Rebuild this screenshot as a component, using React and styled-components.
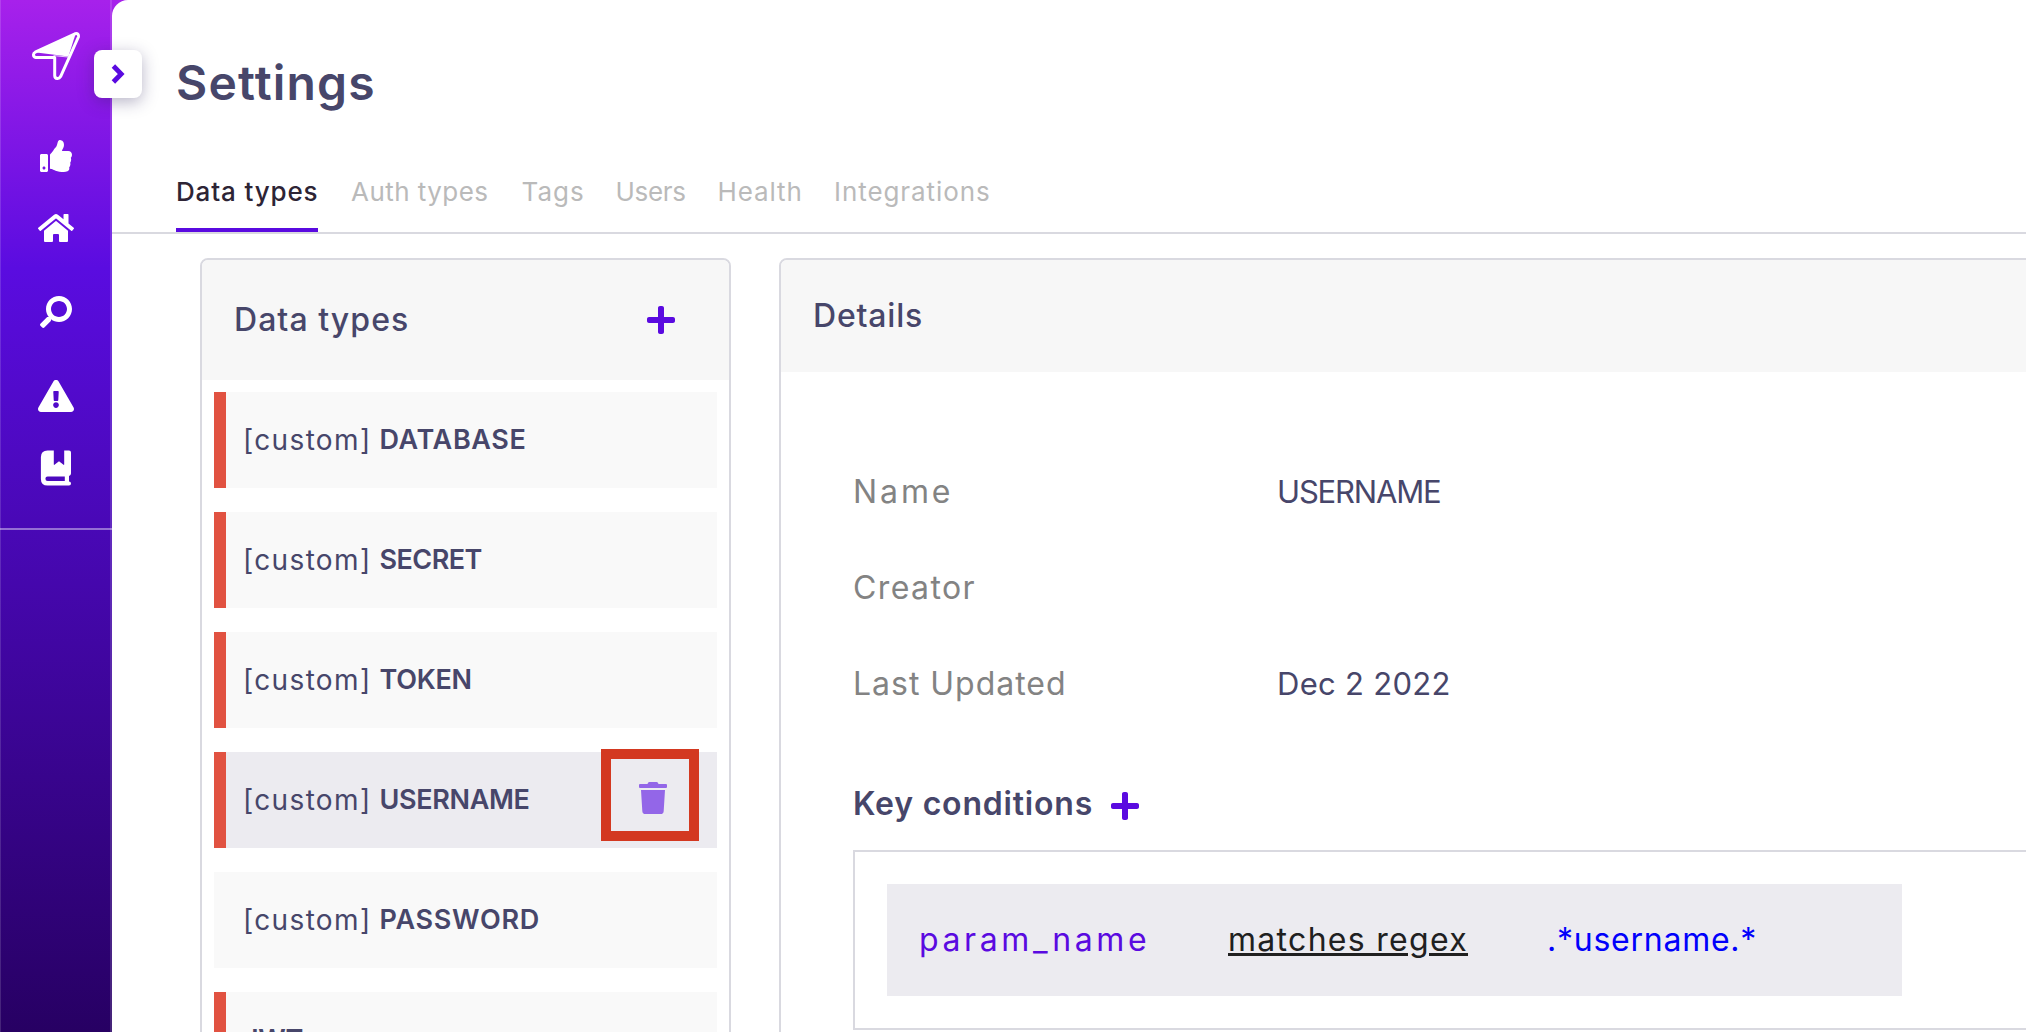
import React from "react";
import styled, { createGlobalStyle, css } from "styled-components";
import { FaThumbsUp, FaHome, FaSearch, FaExclamationTriangle, FaPlus, FaTrash } from "react-icons/fa";

const color = {
  ink: "#47466a",
  accent: "#5a0ae0",
  line: "#d9d9e0",
  panel: "#f7f7f7",
  row: "#f9f9f9",
  rowActive: "#ecebf0",
  danger: "#e15241",
};

const GlobalStyle = createGlobalStyle`
  * { box-sizing: border-box; }
  html, body { margin: 0; padding: 0; overflow: hidden; }
  body {
    font-family: Inter, "Liberation Sans", sans-serif;
    color: ${color.ink};
    -webkit-font-smoothing: antialiased;
  }
`;

const Shell = styled.div`
  display: flex;
  width: 100vw;
  height: 100vh;
  overflow: hidden;
  background: linear-gradient(180deg, #a721eb 0%, #5a0ce0 26%, #270063 100%);
`;

const Sidebar = styled.aside`
  position: relative;
  flex: 0 0 112px;
  display: flex;
  flex-direction: column;
  align-items: center;
  padding-top: 32px;
  box-shadow: inset 1px 0 0 rgba(255, 255, 255, 0.14), inset -2px 0 0 rgba(255, 255, 255, 0.14);
`;

const Logo = styled.svg`
  display: block;
  width: 48px;
  height: 48px;
  margin-bottom: 58px;
`;

const NavItem = styled.a`
  display: flex;
  align-items: center;
  justify-content: center;
  width: 112px;
  height: 36px;
  margin-bottom: ${(p) => p.$after}px;
  color: #fff;
  font-size: 32px;
  svg {
    display: block;
    ${(p) => p.$flip && css`transform: scaleX(-1);`}
  }
`;

const NavDivider = styled.div`
  width: 112px;
  height: 2px;
  background: rgba(255, 255, 255, 0.42);
`;

const ExpandButton = styled.button`
  position: absolute;
  left: 94px;
  top: 50px;
  z-index: 2;
  display: flex;
  align-items: center;
  justify-content: center;
  width: 48px;
  height: 48px;
  padding: 0;
  border: 0;
  border-radius: 8px;
  background: #fff;
  box-shadow: 0 4px 16px rgba(45, 35, 90, 0.34);
`;

const Page = styled.main`
  flex: 1;
  min-width: 0;
  display: flex;
  flex-direction: column;
  overflow: hidden;
  background: #fff;
  border-top-left-radius: 16px;
`;

const Title = styled.h1`
  margin: 0;
  padding: 53px 0 0 64px;
  font-size: 48px;
  font-weight: 600;
  line-height: 60px;
  letter-spacing: 1.2px;
`;

const Tabs = styled.nav`
  display: flex;
  gap: 33px;
  margin-top: 63px;
  padding-left: 64px;
  border-bottom: 2px solid ${color.line};
`;

const Tab = styled.a`
  width: ${(p) => p.$width}px;
  padding-bottom: 20px;
  border-bottom: 4px solid ${(p) => (p.$active ? color.accent : "transparent")};
  color: ${(p) => (p.$active ? "#2d2435" : "#bababa")};
  font-size: 26px;
  font-weight: ${(p) => (p.$active ? 500 : 400)};
  line-height: 32px;
  letter-spacing: ${(p) => p.$track}px;
  white-space: nowrap;
`;

const Content = styled.div`
  flex: 1;
  display: flex;
  gap: 48px;
  padding: 24px 0 0 88px;
`;

const Card = styled.section`
  flex: 0 0 ${(p) => p.$width}px;
  height: 900px;
  border: 2px solid ${color.line};
  border-radius: 8px;
  overflow: hidden;
  background: #fff;
`;

const CardHeader = styled.header`
  display: flex;
  align-items: center;
  justify-content: space-between;
  height: ${(p) => p.$height}px;
  padding: 0 54px 0 32px;
  background: ${color.panel};
`;

const CardTitle = styled.h2`
  margin: 0;
  font-size: 32px;
  font-weight: 500;
  line-height: 40px;
  letter-spacing: ${(p) => p.$track}px;
`;

const AddIcon = styled(FaPlus)`
  display: block;
  width: 28px;
  height: 32px;
  color: ${color.accent};
`;

const TypeList = styled.div`
  display: flex;
  flex-direction: column;
  gap: 24px;
  padding: 12px;
`;

const TypeRow = styled.div`
  position: relative;
  display: flex;
  align-items: center;
  height: 96px;
  padding: 0 50px 0 17px;
  border-left: 12px solid ${(p) => (p.$flagged ? color.danger : color.row)};
  background: ${(p) => (p.$active ? color.rowActive : color.row)};
  font-size: 27px;
  line-height: 36px;
`;

const TypePrefix = styled.span`
  width: 136.5px;
  font-size: 28px;
  letter-spacing: 1.35px;
`;

const TypeName = styled.strong`
  flex: 1;
  font-weight: 600;
  letter-spacing: ${(p) => p.$track}px;
`;

const DeleteIcon = styled(FaTrash)`
  display: block;
  width: 28px;
  height: 32px;
  margin-bottom: 4px;
  color: #9366e8;
`;

const Highlight = styled.div`
  position: absolute;
  top: -3px;
  right: 18px;
  width: 98px;
  height: 92px;
  border: 10px solid #d33820;
`;

const DetailBody = styled.div`
  padding: 72px 32px 0 72px;
`;

const DetailRow = styled.div`
  display: grid;
  grid-template-columns: 424px 1fr;
  align-items: center;
  height: 96px;
  line-height: 40px;
`;

const Label = styled.span`
  color: #838383;
  font-size: 32px;
  letter-spacing: ${(p) => p.$track}px;
`;

const Value = styled.span`
  font-size: 31px;
  letter-spacing: ${(p) => p.$track}px;
`;

const SectionHeading = styled.div`
  display: flex;
  align-items: center;
  padding: 52px 0 26px;
`;

const SectionTitle = styled.h3`
  width: 258px;
  margin: 0;
  font-size: 32px;
  font-weight: 600;
  line-height: 40px;
  letter-spacing: 0.8px;
  white-space: nowrap;
`;

const InlineAdd = styled(AddIcon)`
  margin-top: 4px;
`;

const ConditionBox = styled.div`
  width: 1240px;
  padding: 32px;
  border: 2px solid ${color.line};
`;

const Condition = styled.div`
  display: grid;
  grid-template-columns: 309px 319px 1fr;
  align-items: center;
  width: 1015px;
  height: 112px;
  padding-left: 32px;
  background: ${color.rowActive};
  font-size: 32px;
  line-height: 40px;
`;

const Param = styled.span`
  color: ${color.accent};
  letter-spacing: 3.6px;
`;

const Operator = styled.span`
  color: #202020;
  letter-spacing: 1.3px;
  text-decoration: underline;
  text-decoration-thickness: 3px;
  text-underline-offset: 2px;
`;

const Pattern = styled.span`
  color: #0000fb;
  letter-spacing: 0.75px;
`;

const tabs = [
  { label: "Data types", width: 142, track: 0.85, active: true },
  { label: "Auth types", width: 137.5, track: 0.45 },
  { label: "Tags", width: 61, track: 1 },
  { label: "Users", width: 69, track: -0.3 },
  { label: "Health", width: 83.5, track: 0.9 },
  { label: "Integrations", width: 158, track: 0.93 },
];

const types = [
  { name: "DATABASE", track: 0.64, custom: true, flagged: true },
  { name: "SECRET", track: -0.55, custom: true, flagged: true },
  { name: "TOKEN", track: -0.27, custom: true, flagged: true },
  { name: "USERNAME", track: -0.35, custom: true, flagged: true, active: true },
  { name: "PASSWORD", track: 0.72, custom: true },
  { name: "JWT", track: -0.4, flagged: true },
];

const details = [
  { label: "Name", labelTrack: 2.9, value: "USERNAME", track: -1.18 },
  { label: "Creator", labelTrack: 1.4, value: "" },
  { label: "Last Updated", labelTrack: 0.98, value: "Dec 2 2022", track: 0.3 },
];

function PlaneLogo() {
  return (
    <Logo viewBox="0 0 48 48" fill="none">
      <path
        d="M3.2 20.2 L43 1.8 Q47 0.8 46.4 5 L28.6 44.6 Q27.4 46.6 25.2 46.5 Q22.8 46.3 22.7 43.6 V25.4 H3.8 Q1.5 25 1.5 23 Q1.4 21.2 3.2 20.2 Z"
        stroke="#fff"
        strokeWidth="3"
        strokeLinejoin="round"
      />
      <path d="M4.5 20.5 L43.4 2.6 L36.4 24.6 Z" fill="#fff" />
      <path d="M21.5 23.6 L36 25" stroke="#fff" strokeWidth="0.8" />
    </Logo>
  );
}

function BookIcon() {
  return (
    <svg width="32" height="36" viewBox="0 0 32 36">
      <path
        fill="#fff"
        fillRule="evenodd"
        d="M7.6 0.4 H13.8 V14.2 Q13.8 15.4 14.8 14.6 L19 11.2 L23.2 14.6 Q24.2 15.4 24.2 14.2 V0.4 H29 Q31 0.4 31 2.4 V23.6 Q31 25.2 29 26 V31.6 Q31 31.8 31 33.6 Q31 35.6 29 35.6 H7.6 Q0.9 35.6 0.9 29 V7 Q0.9 0.4 7.6 0.4 Z M7.6 26.6 Q5.4 26.6 5.4 28.8 Q5.4 31 7.6 31 H24.8 V26.6 Z"
      />
    </svg>
  );
}

function Chevron() {
  return (
    <svg width="16" height="22" viewBox="0 0 16 22" fill="none">
      <path d="M3.4 3 L11.2 11 L3.4 19" stroke={color.accent} strokeWidth="4.8" />
    </svg>
  );
}

export default function App() {
  return (
    <>
      <GlobalStyle />
      <Shell>
        <Sidebar>
          <PlaneLogo />
          <NavItem $after={36}><FaThumbsUp /></NavItem>
          <NavItem $after={48}><FaHome size={36} /></NavItem>
          <NavItem $after={48} $flip><FaSearch /></NavItem>
          <NavItem $after={36}><FaExclamationTriangle size={36} /></NavItem>
          <NavItem $after={42}><BookIcon /></NavItem>
          <NavDivider />
          <ExpandButton aria-label="Expand"><Chevron /></ExpandButton>
        </Sidebar>
        <Page>
          <Title>Settings</Title>
          <Tabs>
            {tabs.map((t) => (
              <Tab key={t.label} $width={t.width} $track={t.track} $active={t.active}>{t.label}</Tab>
            ))}
          </Tabs>
          <Content>
            <Card $width={531}>
              <CardHeader $height={120}>
                <CardTitle $track={1.05}>Data types</CardTitle>
                <AddIcon />
              </CardHeader>
              <TypeList>
                {types.map((t) => (
                  <TypeRow key={t.name} $flagged={t.flagged} $active={t.active}>
                    {t.custom && <TypePrefix>[custom]</TypePrefix>}
                    <TypeName $track={t.track}>{t.name}</TypeName>
                    {t.active && <DeleteIcon />}
                    {t.active && <Highlight />}
                  </TypeRow>
                ))}
              </TypeList>
            </Card>
            <Card $width={1348}>
              <CardHeader $height={112}>
                <CardTitle $track={0.8}>Details</CardTitle>
              </CardHeader>
              <DetailBody>
                {details.map((d) => (
                  <DetailRow key={d.label}>
                    <Label $track={d.labelTrack}>{d.label}</Label>
                    <Value $track={d.track || 0}>{d.value}</Value>
                  </DetailRow>
                ))}
                <SectionHeading>
                  <SectionTitle>Key conditions</SectionTitle>
                  <InlineAdd />
                </SectionHeading>
                <ConditionBox>
                  <Condition>
                    <Param>param_name</Param>
                    <div><Operator>matches regex</Operator></div>
                    <Pattern>.*username.*</Pattern>
                  </Condition>
                </ConditionBox>
              </DetailBody>
            </Card>
          </Content>
        </Page>
      </Shell>
    </>
  );
}
